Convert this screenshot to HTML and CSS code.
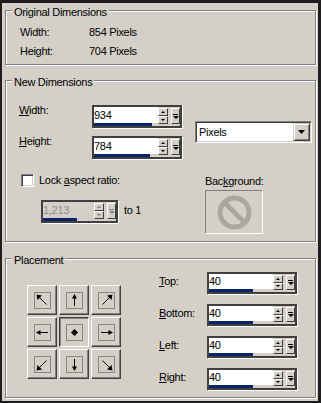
FILE: index.html
```html
<!DOCTYPE html>
<html>
<head>
<meta charset="utf-8">
<link rel="stylesheet" href="styles.css">
</head>
<body>
<div class="dialog">
  <div class="group g-orig">
    <span class="legend">Original Dimensions</span>
    <div class="info">
      <span>Width:</span><span>854 Pixels</span>
      <span>Height:</span><span>704 Pixels</span>
    </div>
  </div>

  <div class="group g-new">
    <span class="legend">New Dimensions</span>
    <div class="dims-top">
      <div class="dim-rows">
        <span class="lbl"><u>W</u>idth:</span>
        <div class="spin">
          <div class="edit"><span class="val">934</span><span class="track"><span class="fill" style="width:91%"></span></span></div>
          <span class="arrows"><span class="sb up"></span><span class="sb dn"></span></span>
          <span class="sb pop"></span>
        </div>
        <span class="lbl"><u>H</u>eight:</span>
        <div class="spin">
          <div class="edit"><span class="val">784</span><span class="track"><span class="fill" style="width:88%"></span></span></div>
          <span class="arrows"><span class="sb up"></span><span class="sb dn"></span></span>
          <span class="sb pop"></span>
        </div>
      </div>
      <div class="combo">
        <span class="combo-text">Pixels</span>
        <span class="combo-btn"><svg width="7" height="4" viewBox="0 0 7 4"><polygon points="0,0 7,0 3.5,4"/></svg></span>
      </div>
    </div>
    <div class="dims-bottom">
      <div class="lock-col">
        <div class="check-row"><span class="check"></span><span>Lock <u>a</u>spect ratio:</span></div>
        <div class="ratio-row">
          <div class="spin ratio dis">
            <div class="edit"><span class="val">1,213</span><span class="track"><span class="fill" style="width:66%"></span></span></div>
            <span class="arrows"><span class="sb up"></span><span class="sb dn"></span></span>
            <span class="sb pop"></span>
          </div>
          <span class="to">to 1</span>
        </div>
      </div>
      <div class="bg-col">
        <span class="bg-lbl">Bac<u>k</u>ground:</span>
        <div class="bg-box">
          <svg width="56" height="42" viewBox="0 0 56 42">
            <circle cx="28.5" cy="21.5" r="14.5" class="no"/>
            <line x1="18.2" y1="11.2" x2="38.8" y2="31.8" class="no"/>
          </svg>
        </div>
      </div>
    </div>
  </div>

  <div class="group g-place">
    <span class="legend">Placement</span>
    <div class="anchors">
      <span class="abtn"><svg width="17" height="17" viewBox="0 0 17 17"><rect x=".5" y=".5" width="16" height="16" class="sq"/><path d="M12.5 12.5L4.5 4.5" class="ln"/><polygon points="2.5,2.5 8,3.5 3.5,8"/></svg></span>
      <span class="abtn"><svg width="17" height="17" viewBox="0 0 17 17"><rect x=".5" y=".5" width="16" height="16" class="sq"/><path d="M8.5 14V5" class="ln"/><polygon points="8.5,2 6,6.5 11,6.5"/></svg></span>
      <span class="abtn"><svg width="17" height="17" viewBox="0 0 17 17"><rect x=".5" y=".5" width="16" height="16" class="sq"/><path d="M4.5 12.5L12.5 4.5" class="ln"/><polygon points="14.5,2.5 9,3.5 13.5,8"/></svg></span>
      <span class="abtn"><svg width="17" height="17" viewBox="0 0 17 17"><rect x=".5" y=".5" width="16" height="16" class="sq"/><path d="M14 8.5H5" class="ln"/><polygon points="2,8.5 6.5,6 6.5,11"/></svg></span>
      <span class="abtn on"><svg width="17" height="17" viewBox="0 0 17 17"><rect x=".5" y=".5" width="16" height="16" class="sq"/><polygon points="8.5,5 12,8.5 8.5,12 5,8.5"/></svg></span>
      <span class="abtn"><svg width="17" height="17" viewBox="0 0 17 17"><rect x=".5" y=".5" width="16" height="16" class="sq"/><path d="M3 8.5H12" class="ln"/><polygon points="15,8.5 10.5,6 10.5,11"/></svg></span>
      <span class="abtn"><svg width="17" height="17" viewBox="0 0 17 17"><rect x=".5" y=".5" width="16" height="16" class="sq"/><path d="M12.5 4.5L4.5 12.5" class="ln"/><polygon points="2.5,14.5 3.5,9 8,13.5"/></svg></span>
      <span class="abtn"><svg width="17" height="17" viewBox="0 0 17 17"><rect x=".5" y=".5" width="16" height="16" class="sq"/><path d="M8.5 3V12" class="ln"/><polygon points="8.5,15 6,10.5 11,10.5"/></svg></span>
      <span class="abtn"><svg width="17" height="17" viewBox="0 0 17 17"><rect x=".5" y=".5" width="16" height="16" class="sq"/><path d="M4.5 4.5L12.5 12.5" class="ln"/><polygon points="14.5,14.5 13.5,9 9,13.5"/></svg></span>
    </div>
    <div class="margins">
      <span class="lbl"><u>T</u>op:</span>
      <div class="spin sm">
        <div class="edit"><span class="val">40</span><span class="track"><span class="fill" style="width:69%"></span></span></div>
        <span class="arrows"><span class="sb up"></span><span class="sb dn"></span></span>
        <span class="sb pop"></span>
      </div>
      <span class="lbl"><u>B</u>ottom:</span>
      <div class="spin sm">
        <div class="edit"><span class="val">40</span><span class="track"><span class="fill" style="width:69%"></span></span></div>
        <span class="arrows"><span class="sb up"></span><span class="sb dn"></span></span>
        <span class="sb pop"></span>
      </div>
      <span class="lbl"><u>L</u>eft:</span>
      <div class="spin sm">
        <div class="edit"><span class="val">40</span><span class="track"><span class="fill" style="width:69%"></span></span></div>
        <span class="arrows"><span class="sb up"></span><span class="sb dn"></span></span>
        <span class="sb pop"></span>
      </div>
      <span class="lbl"><u>R</u>ight:</span>
      <div class="spin sm">
        <div class="edit"><span class="val">40</span><span class="track"><span class="fill" style="width:69%"></span></span></div>
        <span class="arrows"><span class="sb up"></span><span class="sb dn"></span></span>
        <span class="sb pop"></span>
      </div>
    </div>
  </div>
</div>
</body>
</html>
```

FILE: styles.css
```css
* { box-sizing: border-box; }
html, body { margin: 0; }
body {
  width: 321px;
  height: 403px;
  overflow: hidden;
  background: #1e1e1e;
  font-family: "Liberation Sans", Arial, sans-serif;
  font-size: 11px;
  line-height: 13px;
  letter-spacing: -0.3px;
  color: #000;
  white-space: nowrap;
}
u { text-decoration: underline; text-underline-offset: 1px; }

.dialog {
  margin: 3px 3px 0 2px;
  height: 398px;
  background: #d4d0c8;
  padding: 7px 2px 0 3px;
  overflow: hidden;
}

.group {
  position: relative;
  border: 1px solid #808080;
  box-shadow: inset 1px 1px 0 #fff, 1px 1px 0 #fff;
}
.legend {
  position: absolute;
  top: -5px;
  left: 6px;
  padding: 0 2px;
  background: #d4d0c8;
  line-height: 13px;
}

/* Original dimensions */
.g-orig { height: 55px; padding: 12px 0 0 14px; }
.info {
  display: grid;
  grid-template-columns: 69px auto;
  line-height: 19px;
}

/* New dimensions */
.g-new { height: 162px; margin-top: 15px; padding: 24px 0 0 13px; }
.dims-top { display: flex; align-items: center; }
.dim-rows {
  display: grid;
  grid-template-columns: 73px 90px;
  row-gap: 8px;
  align-items: start;
}
.dim-rows .lbl { margin-top: -1px; }

.combo {
  display: flex;
  width: 117px;
  height: 22px;
  margin-left: 13px;
  padding: 1px;
  border: 1px solid;
  border-color: #808080 #fff #fff #808080;
  box-shadow: inset 1px 1px 0 #404040, inset -1px -1px 0 #d4d0c8;
  background: #fff;
}
.combo-text { flex: 1; display: flex; align-items: center; padding-left: 2px; }
.combo-btn {
  width: 17px;
  display: flex;
  align-items: center;
  justify-content: center;
  border: 1px solid;
  border-color: #d4d0c8 #404040 #404040 #d4d0c8;
  box-shadow: inset 1px 1px 0 #fff, inset -1px -1px 0 #808080;
  background: #d4d0c8;
}
.combo-btn svg { display: block; fill: #000; }

.dims-bottom { display: flex; margin-top: 15px; }
.lock-col { width: 186px; padding-left: 2px; }
.check-row { display: flex; align-items: center; height: 13px; }
.check {
  width: 13px;
  height: 13px;
  margin-right: 5px;
  border: 1px solid;
  border-color: #808080 #fff #fff #808080;
  box-shadow: inset 1px 1px 0 #404040, inset -1px -1px 0 #d4d0c8;
  background: #fff;
}
.ratio-row { display: flex; align-items: center; margin: 13px 0 0 20px; }
.to { margin: 0 0 3px 6px; }

.bg-col { display: flex; flex-direction: column; align-items: flex-start; }
.bg-lbl { line-height: 14px; }
.bg-box {
  margin-top: 2px;
  width: 58px;
  height: 44px;
  border: 1px solid;
  border-color: #808080 #fff #fff #808080;
}
.bg-box svg { display: block; }
.no { fill: none; stroke: #aaa7a1; stroke-width: 5; }

/* Spin control */
.spin {
  display: flex;
  align-items: stretch;
  width: 90px;
  height: 23px;
  border: 2px solid #404040;
  box-shadow: 1px 1px 0 #fff;
  background: #d4d0c8;
  flex: none;
}
.spin.sm { height: 22px; }
.spin.ratio { width: 77px; }
.edit { flex: 1; display: flex; flex-direction: column; min-width: 0; }
.val { flex: 1; display: flex; align-items: center; background: #fff; overflow: hidden; }
.track { height: 3px; display: flex; background: #d4d0c8; }
.fill { display: block; height: 3px; background: #0a246a; }
.arrows { width: 10px; display: flex; flex-direction: column; margin: 1px 0 2px; }
.sb {
  display: flex;
  align-items: center;
  justify-content: center;
  background: #d4d0c8;
  border: 1px solid;
  border-color: #fff #404040 #404040 #fff;
}
.arrows .sb { flex: 1; }
.up::after {
  content: "";
  border-left: 2px solid transparent;
  border-right: 2px solid transparent;
  border-bottom: 2px solid #000;
}
.dn::after {
  content: "";
  border-left: 2px solid transparent;
  border-right: 2px solid transparent;
  border-top: 2px solid #000;
}
.pop {
  flex: none;
  width: 9px;
  margin: 1px 0 2px 3px;
  flex-direction: column;
  gap: 1px;
}
.pop::before { content: ""; width: 5px; height: 1px; background: #000; }
.pop::after {
  content: "";
  border-left: 3px solid transparent;
  border-right: 3px solid transparent;
  border-top: 3px solid #000;
}
.dis .val { background: #d4d0c8; color: #8e8e8e; }
.dis .up::after { border-bottom-color: #808080; }
.dis .dn::after { border-top-color: #808080; }
.dis .pop::before { background: #808080; }
.dis .pop::after { border-top-color: #808080; }

/* Placement */
.g-place {
  height: 140px;
  margin-top: 16px;
  padding: 13px 0 0 21px;
  display: flex;
  align-items: flex-start;
}
.anchors {
  margin-top: 13px;
  display: grid;
  grid-template-columns: repeat(3, 30px);
  grid-auto-rows: 30px;
  gap: 2px;
}
.abtn {
  display: flex;
  align-items: center;
  justify-content: center;
  background: #d4d0c8;
  border: 1px solid;
  border-color: #fff #404040 #404040 #fff;
  box-shadow: inset -1px -1px 0 #808080;
}
.abtn.on {
  border-color: #404040 #fff #fff #404040;
  box-shadow: inset 1px 1px 0 #808080;
}
.abtn svg { display: block; }
.sq { fill: none; stroke: #868686; }
.ln { fill: none; stroke: #000; stroke-width: 1; }
.abtn polygon { fill: #000; }

.margins {
  margin-left: 38px;
  display: grid;
  grid-template-columns: 48px 90px;
  grid-auto-rows: 22px;
  row-gap: 10px;
  align-items: start;
}
.margins .lbl { margin-top: 3px; }
```
